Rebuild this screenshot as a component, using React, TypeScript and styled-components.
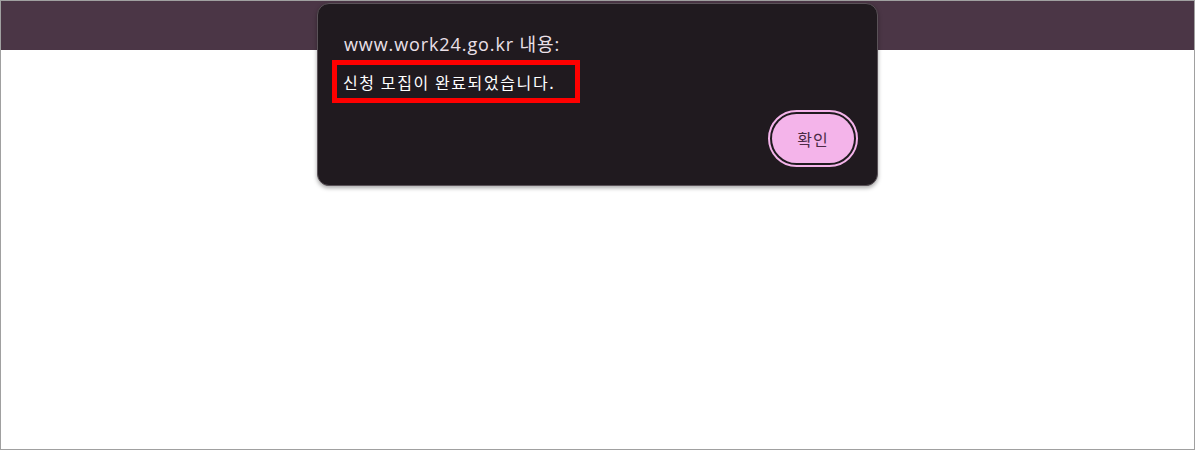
import React from "react";
import styled, { createGlobalStyle } from "styled-components";

const Global = createGlobalStyle`
  html, body { margin: 0; padding: 0; background: #ffffff; }
  * { box-sizing: border-box; }
`;

const Frame = styled.div`
  position: relative;
  width: 1195px;
  height: 450px;
  border: 1px solid #a0a0a0;
  background: #ffffff;
  display: flex;
  flex-direction: column;
`;

const TopBar = styled.div`
  height: 49px;
  background: #4b3646;
  flex: none;
`;

const Dialog = styled.div`
  position: absolute;
  left: 316px;
  top: 2px;
  width: 561px;
  height: 183px;
  background: #201a1f;
  border: 1px solid #5a5258;
  border-radius: 12px;
  box-shadow: 0 2px 4px rgba(0, 0, 0, 0.35);
  padding: 27px 23px 22px 26px;
  display: flex;
  flex-direction: column;
  font-family: "Noto Sans", "Noto Sans CJK KR", sans-serif;
`;

const Title = styled.div`
  color: #ebe0e8;
  font-size: 18px;
  letter-spacing: 0.9px;
  line-height: 26px;
  font-family: "Open Sans", "Noto Sans CJK KR", sans-serif;
`;

const Highlight = styled.div`
  align-self: flex-start;
  margin-left: -12px;
  margin-top: 3px;
  width: 248px;
  height: 43px;
  border: 5px solid #ff0000;
  padding: 0 0 0 6px;
  display: flex;
  align-items: center;
`;

const Message = styled.span`
  color: #ffffff;
  font-size: 16px;
  letter-spacing: 1.6px;
  font-family: "Noto Sans CJK KR", sans-serif;
  line-height: 20px;
`;

const Actions = styled.div`
  margin-top: auto;
  display: flex;
  justify-content: flex-end;
`;

const OkButton = styled.button`
  width: 82px;
  height: 49px;
  border-radius: 25px;
  border: none;
  background: #f4b4ea;
  color: #4b2b45;
  font-size: 16px;
  letter-spacing: 1px;
  font-family: "Noto Sans CJK KR", sans-serif;
  outline: 2px solid #f4b4ea;
  outline-offset: 2px;
  cursor: pointer;
`;

export default function App() {
  return (
    <>
      <Global />
      <Frame>
        <TopBar />
        <Dialog>
          <Title>www.work24.go.kr 내용:</Title>
          <Highlight>
            <Message>신청 모집이 완료되었습니다.</Message>
          </Highlight>
          <Actions>
            <OkButton>확인</OkButton>
          </Actions>
        </Dialog>
      </Frame>
    </>
  );
}
